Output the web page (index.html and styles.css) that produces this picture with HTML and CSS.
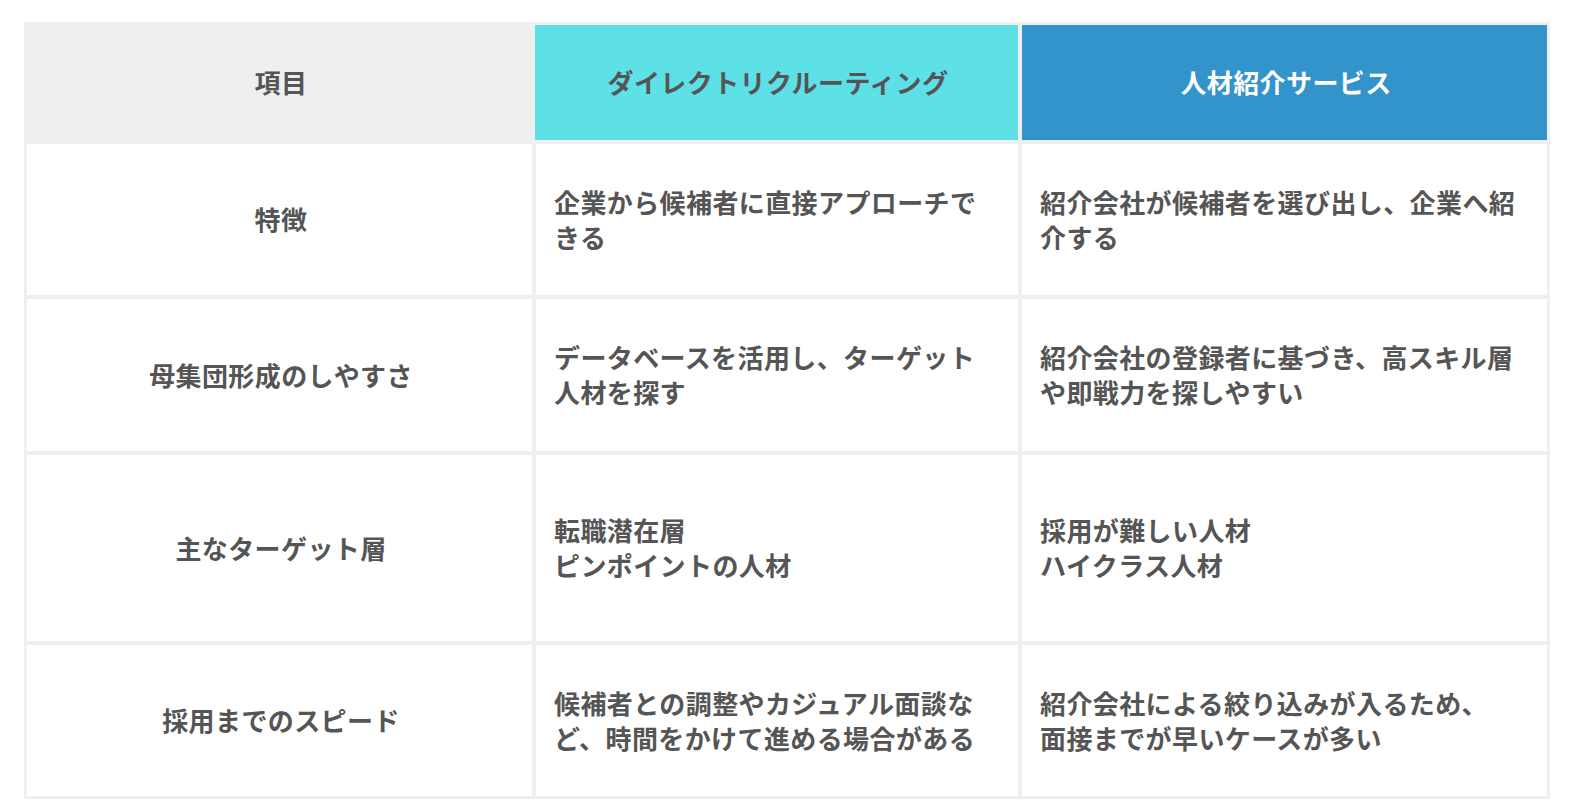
FILE: index.html
```html
<!DOCTYPE html>
<html lang="ja">
<head>
<meta charset="utf-8">
<title>比較表</title>
<link rel="stylesheet" href="styles.css">
</head>
<body>
<div class="page">
  <div class="compare">
    <div class="cell head head-item">項目</div>
    <div class="cell head head-dr">ダイレクトリクルーティング</div>
    <div class="cell head head-agent">人材紹介サービス</div>

    <div class="cell label">特徴</div>
    <div class="cell body">企業から候補者に直接アプローチできる</div>
    <div class="cell body">紹介会社が候補者を選び出し、企業へ紹介する</div>

    <div class="cell label">母集団形成のしやすさ</div>
    <div class="cell body">データベースを活用し、ターゲット人材を探す</div>
    <div class="cell body">紹介会社の登録者に基づき、高スキル層や即戦力を探しやすい</div>

    <div class="cell label">主なターゲット層</div>
    <div class="cell body">転職潜在層<br>ピンポイントの人材</div>
    <div class="cell body">採用が難しい人材<br>ハイクラス人材</div>

    <div class="cell label">採用までのスピード</div>
    <div class="cell body">候補者との調整やカジュアル面談など、時間をかけて進める場合がある</div>
    <div class="cell body">紹介会社による絞り込みが入るため、<br>面接までが早いケースが多い</div>
  </div>
</div>
</body>
</html>
```

FILE: styles.css
```css
html, body {
  margin: 0;
  padding: 0;
  background: #ffffff;
}

body {
  font-family: "Noto Sans CJK JP", "Noto Sans", sans-serif;
  color: #555555;
}

.page {
  padding: 22px 26px 9px 24px;
}

.compare {
  width: 1526px;
  box-sizing: border-box;
  display: grid;
  grid-template-columns: 505px 482px 525px;
  grid-template-rows: 115px 151px 152px 186px 151px;
  column-gap: 4px;
  row-gap: 4px;
  padding: 3px;
  background: #efefef;
}

.cell {
  display: flex;
  align-items: center;
  font-size: 26px;
  font-weight: 700;
  letter-spacing: 0.4px;
  line-height: 35px;
  padding-bottom: 2px;
  box-sizing: border-box;
}

.head {
  justify-content: center;
  padding-left: 3px;
}

.head-item {
  background: #efefef;
}

.head-dr {
  background: #5de0e6;
  margin-left: -1px;
}

.head-agent {
  background: #3393cb;
  color: #ffffff;
}

.label {
  background: #ffffff;
  justify-content: center;
  padding-left: 3px;
}

.body {
  background: #ffffff;
  padding-left: 18px;
  padding-right: 18px;
}
```
